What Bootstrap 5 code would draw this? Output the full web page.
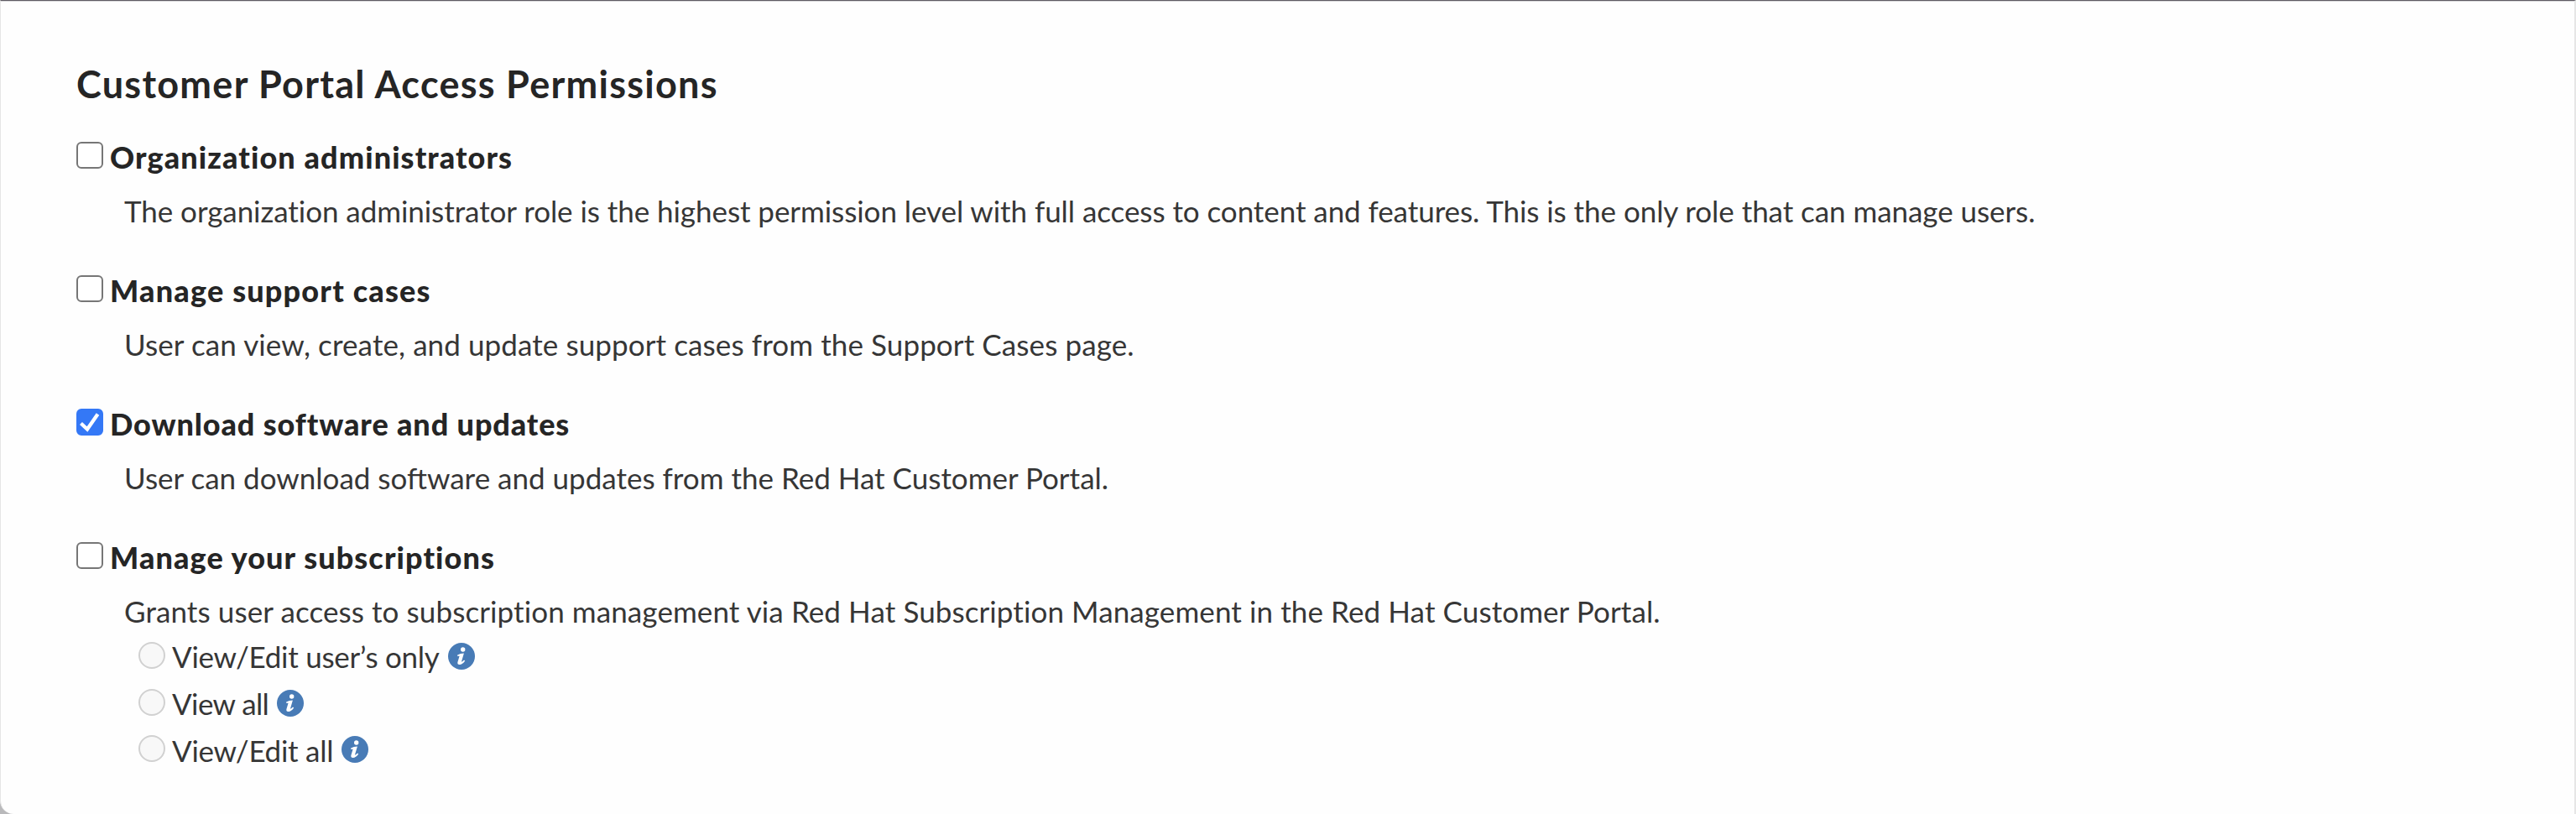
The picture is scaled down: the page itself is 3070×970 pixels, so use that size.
<!DOCTYPE html>
<html lang="en">
<head>
<meta charset="utf-8">
<title>Customer Portal Access Permissions</title>
<link href="https://cdn.jsdelivr.net/npm/bootstrap@5.3.0/dist/css/bootstrap.min.css" rel="stylesheet">
<style>
  body { font-family: Lato, "Open Sans", sans-serif; background: #b9b9bb; color: #363636; height: 970px; overflow: hidden; }
  .panel { height: 970px; background: #fefefe; border: solid #e6e6e6; border-width: 1px 2px 0 1px; border-top-color: #5f5c63; border-radius: 0 0 0 16px; padding: 73px 90px 0; box-shadow: inset 0 1px 0 #d8d8da; }
  .panel-title { font-size: 45px; line-height: 52px; font-weight: 700; letter-spacing: 1.27px; color: #252525; margin: 0 0 37px; }
  .perm { height: 159px; }
  .perm-last { height: auto; }
  .perm-label { font-size: 36px; line-height: 48px; font-weight: 900; color: #252525; margin-left: 8px; white-space: nowrap; }
  .perm-text { font-size: 35px; line-height: 48px; margin: 16px 0 0 57px; white-space: nowrap; }
  .form-check-input.perm-box { width: 32px; height: 32px; margin: 6px 0 0; border: 2px solid #767676; border-radius: 6px; background-color: #fff; flex: none; }
  .form-check-input.perm-box:checked { background-color: #3478f6; border-color: #3478f6; background-image: url("data:image/svg+xml,%3Csvg xmlns='http://www.w3.org/2000/svg' viewBox='0 0 32 32'%3E%3Cpath d='M5.5 17.5L13 24.5L25.5 6.5' fill='none' stroke='%23fff' stroke-width='4.3'/%3E%3C/svg%3E"); background-size: 32px 32px; }
  .levels { margin: 3.3px 0 0 74px; }
  .level { height: 55.7px; font-size: 35px; line-height: 55.7px; }
  .form-check-input.level-dot { width: 32px; height: 32px; margin: 9.7px 8px 0 0; border: 2px solid #d1d1d1; background-color: #f8f8f8; flex: none; }
  .form-check-input.level-dot:disabled { opacity: 1; }
  .info { width: 32px; height: 32px; margin: 10.7px 0 0 10px; flex: none; }
</style>
</head>
<body>
<main class="panel">
  <h2 class="panel-title">Customer Portal Access Permissions</h2>

  <section class="perm">
    <div class="d-flex align-items-start">
      <input class="form-check-input perm-box" type="checkbox" id="org">
      <label class="perm-label" for="org" style="letter-spacing:1.1px">Organization administrators</label>
    </div>
    <p class="perm-text" style="letter-spacing:-.06px">The organization administrator role is the highest permission level with full access to content and features. This is the only role that can manage users.</p>
  </section>

  <section class="perm">
    <div class="d-flex align-items-start">
      <input class="form-check-input perm-box" type="checkbox" id="cases">
      <label class="perm-label" for="cases" style="letter-spacing:1.2px">Manage support cases</label>
    </div>
    <p class="perm-text" style="letter-spacing:.1px">User can view, create, and update support cases from the Support Cases page.</p>
  </section>

  <section class="perm">
    <div class="d-flex align-items-start">
      <input class="form-check-input perm-box" type="checkbox" id="download" checked>
      <label class="perm-label" for="download" style="letter-spacing:.9px">Download software and updates</label>
    </div>
    <p class="perm-text">User can download software and updates from the Red Hat Customer Portal.</p>
  </section>

  <section class="perm perm-last">
    <div class="d-flex align-items-start">
      <input class="form-check-input perm-box" type="checkbox" id="subs">
      <label class="perm-label" for="subs" style="letter-spacing:1.1px">Manage your subscriptions</label>
    </div>
    <p class="perm-text" style="letter-spacing:.1px">Grants user access to subscription management via Red Hat Subscription Management in the Red Hat Customer Portal.</p>
    <div class="levels">
      <div class="level d-flex align-items-start">
        <input class="form-check-input level-dot" type="radio" name="lv" disabled>
        <span style="letter-spacing:-.26px">View/Edit user’s only</span>
        <svg class="info" viewBox="0 0 32 32"><circle cx="16" cy="16" r="16" fill="#487bb6"/><circle cx="17.7" cy="8" r="2.7" fill="#fff"/><path d="M11.2 14.6Q14.5 12.8 18.9 12.6L15.9 22.8Q17.4 22.7 19 20.6L20.2 21.6Q17.2 26 13.6 26Q10.8 25.8 11.4 23L13.6 15.7H11Z" fill="#fff"/></svg>
      </div>
      <div class="level d-flex align-items-start">
        <input class="form-check-input level-dot" type="radio" name="lv" disabled>
        <span style="letter-spacing:-.6px">View all</span>
        <svg class="info" viewBox="0 0 32 32"><circle cx="16" cy="16" r="16" fill="#487bb6"/><circle cx="17.7" cy="8" r="2.7" fill="#fff"/><path d="M11.2 14.6Q14.5 12.8 18.9 12.6L15.9 22.8Q17.4 22.7 19 20.6L20.2 21.6Q17.2 26 13.6 26Q10.8 25.8 11.4 23L13.6 15.7H11Z" fill="#fff"/></svg>
      </div>
      <div class="level d-flex align-items-start">
        <input class="form-check-input level-dot" type="radio" name="lv" disabled>
        <span style="letter-spacing:-.27px">View/Edit all</span>
        <svg class="info" viewBox="0 0 32 32"><circle cx="16" cy="16" r="16" fill="#487bb6"/><circle cx="17.7" cy="8" r="2.7" fill="#fff"/><path d="M11.2 14.6Q14.5 12.8 18.9 12.6L15.9 22.8Q17.4 22.7 19 20.6L20.2 21.6Q17.2 26 13.6 26Q10.8 25.8 11.4 23L13.6 15.7H11Z" fill="#fff"/></svg>
      </div>
    </div>
  </section>
</main>
<script src="https://cdn.jsdelivr.net/npm/bootstrap@5.3.0/dist/js/bootstrap.bundle.min.js"></script>
</body>
</html>
